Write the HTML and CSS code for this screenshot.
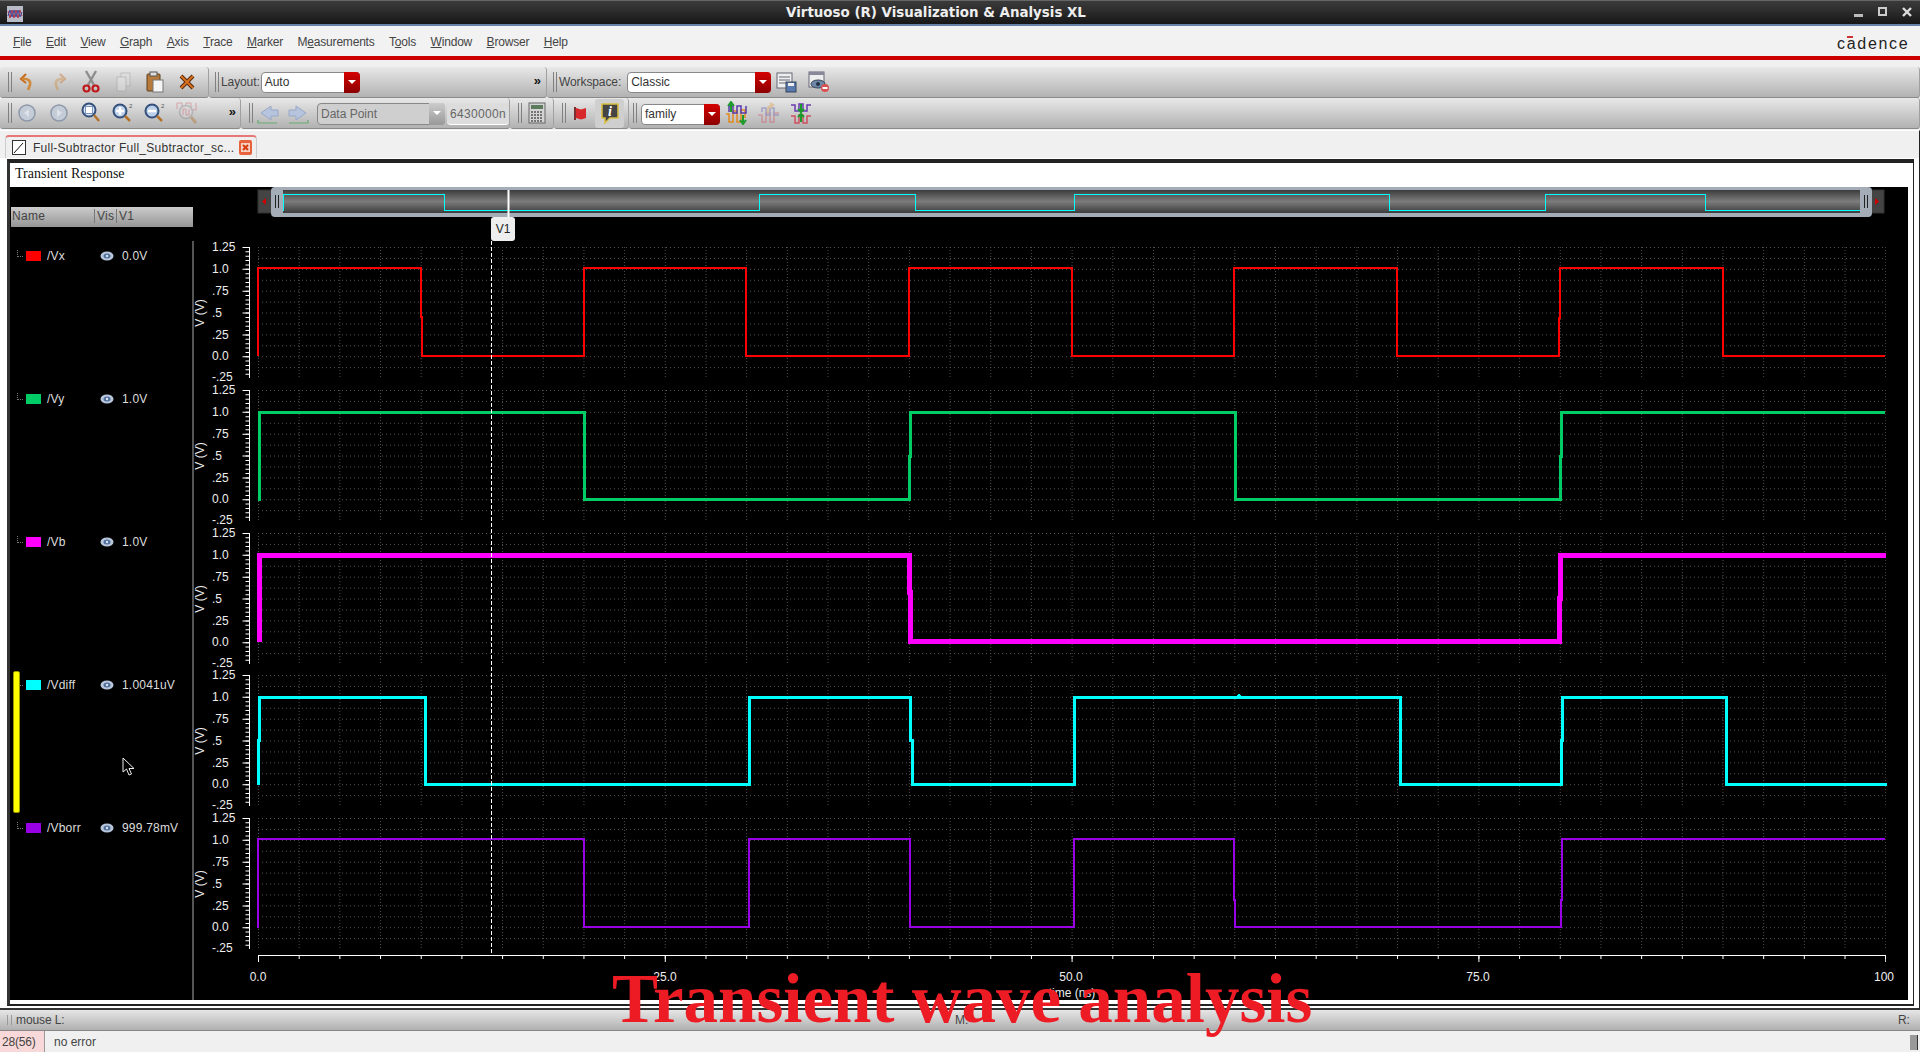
FILE: index.html
```html
<!DOCTYPE html>
<html lang="en">
<head>
  <meta charset="UTF-8">
  <title>Virtuoso (R) Visualization &amp; Analysis XL</title>
  <link rel="stylesheet" href="styles.css">
</head>
<body>
  <div class="titlebar">
    <svg class="app-icon" width="16" height="16" viewBox="0 0 16 16"><rect width="16" height="16" fill="#b9bcc6"/><path d="M1 5 3 12 5 4 7 12 9 4 11 12 13 4 15 10" fill="none" stroke="#b03048" stroke-width="1"/><path d="M1 10 3 4 5 11 7 4 9 11 11 4 13 11 15 6" fill="none" stroke="#3a4a9a" stroke-width="1"/></svg>
    <span class="title-text">Virtuoso (R) Visualization &amp; Analysis XL</span>
    <div class="win-btns">
      <svg width="12" height="12" viewBox="0 0 12 12"><rect x="1" y="8" width="9" height="3" fill="#bbb"/></svg>
      <svg width="12" height="12" viewBox="0 0 12 12"><rect x="2" y="2" width="7" height="7" fill="none" stroke="#ccc" stroke-width="2"/></svg>
      <svg width="12" height="12" viewBox="0 0 12 12"><path d="M2 2 10 10M10 2 2 10" stroke="#ddd" stroke-width="2.4"/></svg>
    </div>
  </div>

  <div class="menubar">
    <span class="menu-item"><u>F</u>ile</span>
    <span class="menu-item"><u>E</u>dit</span>
    <span class="menu-item"><u>V</u>iew</span>
    <span class="menu-item"><u>G</u>raph</span>
    <span class="menu-item"><u>A</u>xis</span>
    <span class="menu-item"><u>T</u>race</span>
    <span class="menu-item"><u>M</u>arker</span>
    <span class="menu-item">M<u>e</u>asurements</span>
    <span class="menu-item">T<u>o</u>ols</span>
    <span class="menu-item"><u>W</u>indow</span>
    <span class="menu-item"><u>B</u>rowser</span>
    <span class="menu-item"><u>H</u>elp</span>
    <span class="logo">cadence<i class="logo-bar"></i></span>
  </div>

  <div class="toolbar">
    <div class="tool-section sec-edit">
      <i class="grip"></i>
      <span class="slot"><svg width="24" height="24" viewBox="0 0 24 24"><path d="M11 4 6 9l5 4" fill="none" stroke="#c96a1c" stroke-width="2"/><path d="M7 9c6-1 9 2 8 6l-2 5" fill="none" stroke="#d08a3c" stroke-width="2.600"/></svg></span>
      <span class="slot faded"><svg width="24" height="24" viewBox="0 0 24 24"><path d="M13 4 18 9l-5 4" fill="none" stroke="#c96a1c" stroke-width="2"/><path d="M17 9c-6-1-9 2-8 6l2 5" fill="none" stroke="#d08a3c" stroke-width="2.600"/></svg></span>
      <span class="slot"><svg width="24" height="24" viewBox="0 0 24 24"><path d="M7 1 15 15M17 1 9 15" stroke="#8d8d8d" stroke-width="2.4"/><circle cx="7.5" cy="18.5" r="3" fill="none" stroke="#c01818" stroke-width="2.2"/><circle cx="16.5" cy="18.5" r="3" fill="none" stroke="#c01818" stroke-width="2.2"/></svg></span>
      <span class="slot faded"><svg width="24" height="24" viewBox="0 0 24 24"><rect x="10" y="3" width="9" height="13" fill="#e4e4e4" stroke="#999"/><rect x="6" y="7" width="9" height="14" fill="#ececec" stroke="#999"/></svg></span>
      <span class="slot"><svg width="24" height="24" viewBox="0 0 24 24"><rect x="4" y="4" width="13" height="17" rx="1" fill="#b87a3a" stroke="#5c3c1c"/><rect x="7" y="2" width="7" height="4" fill="#ddd" stroke="#555"/><rect x="10" y="10" width="10" height="12" fill="#f4f4f4" stroke="#777"/></svg></span>
      <span class="slot"><svg width="24" height="24" viewBox="0 0 24 24"><path d="M6 6 18 18M18 6 6 18" stroke="#5a2a10" stroke-width="4"/><path d="M6 6 18 18M18 6 6 18" stroke="#d8701c" stroke-width="2"/></svg></span>
    </div>
    <div class="tool-section sec-layout">
      <i class="grip"></i>
      <span class="tool-label">Layout:</span>
      <span class="combo combo-layout">Auto<i class="combo-arrow"></i></span>
      <span class="more">»</span>
    </div>
    <div class="tool-section sec-workspace">
      <i class="grip"></i>
      <span class="tool-label">Workspace:</span>
      <span class="combo combo-workspace">Classic<i class="combo-arrow"></i></span>
      <span class="slot"><svg width="24" height="24" viewBox="0 0 24 24"><rect x="2" y="3" width="15" height="15" fill="#eee" stroke="#667"/><path d="M4 7H15M4 10H15M4 13H12" stroke="#667"/><rect x="11" y="12" width="10" height="10" fill="#5a78b0" stroke="#345"/><rect x="13" y="13" width="6" height="3" fill="#eee"/></svg></span>
      <span class="slot"><svg width="24" height="24" viewBox="0 0 24 24"><rect x="2" y="2" width="15" height="15" fill="#eee" stroke="#667"/><rect x="2" y="2" width="15" height="3" fill="#889"/><ellipse cx="11" cy="14" rx="7" ry="4" fill="#7088a8" stroke="#345"/><circle cx="11" cy="14" r="2" fill="#234"/><circle cx="18" cy="18" r="4" fill="#d85050"/><rect x="15.500" y="17" width="5" height="2" fill="#fff"/></svg></span>
    </div>
  </div>

  <div class="toolbar">
    <div class="tool-section sec-zoom">
      <i class="grip"></i>
      <span class="slot"><svg width="24" height="24" viewBox="0 0 24 24"><circle cx="12" cy="12" r="8" fill="#c4ccd8" stroke="#8d98aa" stroke-width="1.500"/><path d="M14 8 9 12l5 4z" fill="#dde2ea"/></svg></span>
      <span class="slot"><svg width="24" height="24" viewBox="0 0 24 24"><circle cx="12" cy="12" r="8" fill="#c4ccd8" stroke="#8d98aa" stroke-width="1.500"/><path d="M10 8 15 12l-5 4z" fill="#dde2ea"/></svg></span>
      <span class="slot"><svg width="24" height="24" viewBox="0 0 24 24"><circle cx="10" cy="9" r="6.500" fill="#dce6f6" stroke="#34507a" stroke-width="2"/><rect x="6.500" y="5.500" width="7" height="7" fill="#fff" stroke="#7a94c0"/><path d="M15 14 20 20" stroke="#b5702a" stroke-width="2.500"/></svg></span>
      <span class="slot"><svg width="24" height="24" viewBox="0 0 24 24"><circle cx="9" cy="10" r="6.500" fill="#bcd0ec" stroke="#34507a" stroke-width="2"/><path d="M5 10H13M9 6V14" stroke="#fff" stroke-width="2.500"/><path d="M14 15 19 20" stroke="#b5702a" stroke-width="2.500"/><text class="sup" x="18" y="7">2</text></svg></span>
      <span class="slot"><svg width="24" height="24" viewBox="0 0 24 24"><circle cx="9" cy="10" r="6.500" fill="#bcd0ec" stroke="#34507a" stroke-width="2"/><path d="M5 10H13" stroke="#fff" stroke-width="2.500"/><path d="M14 15 19 20" stroke="#b5702a" stroke-width="2.500"/><text class="sup" x="18" y="7">2</text></svg></span>
      <span class="slot faded"><svg width="24" height="24" viewBox="0 0 24 24"><path d="M2 8V2H7V9H11V2H16V9H21V2" fill="none" stroke="#d05060"/><circle cx="11" cy="11" r="6.500" fill="#ddd" stroke="#888" stroke-width="1.500"/><path d="M8 14V8H11V14H14V8" fill="none" stroke="#d05060"/><path d="M16 16 21 22" stroke="#b5702a" stroke-width="3"/></svg></span>
      <span class="more">»</span>
    </div>
    <div class="tool-section sec-point">
      <i class="grip"></i>
      <span class="slot slot-step"><svg width="24" height="24" viewBox="0 0 24 24"><path d="M15 5V9H22V15H15V19L5 12z" fill="#b6c4de" stroke="#98a8c6"/><path d="M2 19V22H21" fill="none" stroke="#6aaa70" stroke-width="1.200"/></svg></span>
      <span class="slot slot-step"><svg width="24" height="24" viewBox="0 0 24 24"><path d="M10 5V9H3V15H10V19L20 12z" fill="#b6c4de" stroke="#98a8c6"/><path d="M3 22H22V19" fill="none" stroke="#6aaa70" stroke-width="1.200"/></svg></span>
      <span class="combo combo-point">Data Point<i class="combo-arrow arrow-off"></i></span>
      <span class="value-box">6430000n</span>
    </div>
    <div class="tool-section sec-calc">
      <i class="grip"></i>
      <span class="slot slot-single"><svg width="24" height="24" viewBox="0 0 24 24"><rect x="4" y="2" width="16" height="20" fill="#d4d4d4" stroke="#666"/><rect x="6" y="4" width="12" height="4" fill="#5c7a5c"/><path d="M6 11H18M6 14H18M6 17H18M6 20H18" stroke="#555" stroke-width="1.500" stroke-dasharray="2 1"/></svg></span>
    </div>
    <div class="tool-section sec-marks">
      <i class="grip"></i>
      <span class="slot slot-flag"><svg width="24" height="24" viewBox="0 0 24 24"><path d="M7 6V19" stroke="#7a3030" stroke-width="2"/><path d="M8 7 13 8.500 18 7V17L13 18.500 8 17z" fill="#d8282c"/></svg></span>
      <span class="toggle-btn"><svg width="24" height="24" viewBox="0 0 24 24"><path d="M4 3H20V17H12L7 22V17H4z" fill="#444" stroke="#d8c040" stroke-width="1.500"/><text class="info-i" x="12" y="15">i</text></svg></span>
    </div>
    <div class="tool-section sec-family">
      <i class="grip"></i>
      <span class="combo combo-family">family<i class="combo-arrow"></i></span>
      <span class="slot"><svg width="24" height="24" viewBox="0 0 24 24"><path d="M1 13H4V21H8V10H12V21H16V9H20V17" fill="none" stroke="#e08a20" stroke-width="1.500"/><path d="M4 11V5H8V12H12V5H16V12H21V5" fill="none" stroke="#5a3ab0" stroke-width="1.500"/><path d="M6 11V3M3 5 6 1l3 4" fill="none" stroke="#1a9a2a" stroke-width="2"/><path d="M18 14V21M15 19l3 4 3-4" fill="none" stroke="#1a9a2a" stroke-width="2"/></svg></span>
      <span class="slot faded"><svg width="24" height="24" viewBox="0 0 24 24"><path d="M1 14H5V21H9V12H13V21H17V12H22" fill="none" stroke="#d05060" stroke-width="1.500"/><path d="M5 11V7H9V14H13V7H17V14H22" fill="none" stroke="#5a5ab0" stroke-width="1.500"/><path d="M11 12C10 7 12 4 16 4M13 2l3 2-3 3" fill="none" stroke="#e0a040" stroke-width="2"/></svg></span>
      <span class="slot"><svg width="24" height="24" viewBox="0 0 24 24"><path d="M2 4H6V10H10V3H14V10H18V4H22" fill="none" stroke="#6a3ab0" stroke-width="1.500"/><path d="M2 15H6V22H10V14H14V22H18V15H22" fill="none" stroke="#d05060" stroke-width="1.500"/><path d="M12 3V10M9 8l3 3 3-3" fill="none" stroke="#1a9a2a" stroke-width="2"/><path d="M12 21V14M9 16l3-3 3 3" fill="none" stroke="#1a9a2a" stroke-width="2"/></svg></span>
    </div>
  </div>

  <div class="tabstrip">
    <div class="tab">
      <svg class="tab-icon" width="14" height="15" viewBox="0 0 14 15"><rect x="0.500" y="0.500" width="13" height="14" fill="#fff" stroke="#333"/><path d="M2 13 11 3" stroke="#111"/></svg>
      <span class="tab-text">Full-Subtractor Full_Subtractor_sc...</span>
      <svg class="tab-close" width="13" height="15" viewBox="0 0 13 15"><rect width="13" height="15" rx="2" fill="#e8623c"/><rect x="2" y="3" width="9" height="9" fill="#f4d0c0"/><path d="M4 5 9 10M9 5 4 10" stroke="#d83a10" stroke-width="2"/></svg>
    </div>
  </div>

  <div class="frame">
    <div class="frame-inner">
      <div class="plot-title">Transient Response</div>
      <div class="plot-body">
        <div class="legend">
          <div class="legend-head">
            <span class="col-name">Name</span>
            <span class="col-vis">Vis</span>
            <span class="col-val">V1</span>
          </div>
          <div class="legend-rows">
            <div class="legend-row">
              <i class="tree"></i><i class="swatch c-vx"></i><span class="sig-name">/Vx</span>
              <svg class="eye" width="14" height="10" viewBox="0 0 14 10"><ellipse cx="7" cy="5" rx="6.500" ry="4.500" fill="#b8c6dc"/><ellipse cx="7" cy="5" rx="3.500" ry="2.500" fill="#52709c"/><circle cx="7" cy="5" r="1.200" fill="#dde6f2"/></svg>
              <span class="sig-val">0.0V</span>
            </div>
            <div class="legend-row">
              <i class="tree"></i><i class="swatch c-vy"></i><span class="sig-name">/Vy</span>
              <svg class="eye" width="14" height="10" viewBox="0 0 14 10"><ellipse cx="7" cy="5" rx="6.500" ry="4.500" fill="#b8c6dc"/><ellipse cx="7" cy="5" rx="3.500" ry="2.500" fill="#52709c"/><circle cx="7" cy="5" r="1.200" fill="#dde6f2"/></svg>
              <span class="sig-val">1.0V</span>
            </div>
            <div class="legend-row">
              <i class="tree"></i><i class="swatch c-vb"></i><span class="sig-name">/Vb</span>
              <svg class="eye" width="14" height="10" viewBox="0 0 14 10"><ellipse cx="7" cy="5" rx="6.500" ry="4.500" fill="#b8c6dc"/><ellipse cx="7" cy="5" rx="3.500" ry="2.500" fill="#52709c"/><circle cx="7" cy="5" r="1.200" fill="#dde6f2"/></svg>
              <span class="sig-val">1.0V</span>
            </div>
            <div class="legend-row selected">
              <i class="tree"></i><i class="swatch c-vdiff"></i><span class="sig-name">/Vdiff</span>
              <svg class="eye" width="14" height="10" viewBox="0 0 14 10"><ellipse cx="7" cy="5" rx="6.500" ry="4.500" fill="#b8c6dc"/><ellipse cx="7" cy="5" rx="3.500" ry="2.500" fill="#52709c"/><circle cx="7" cy="5" r="1.200" fill="#dde6f2"/></svg>
              <span class="sig-val">1.0041uV</span>
              <svg class="mouse" width="14" height="20" viewBox="0 0 14 20"><path d="M1 1V15L4.500 12 7 18 9.500 17 7 11.500H12z" fill="#000" stroke="#eee"/></svg>
            </div>
            <div class="legend-row">
              <i class="tree"></i><i class="swatch c-vborr"></i><span class="sig-name">/Vborr</span>
              <svg class="eye" width="14" height="10" viewBox="0 0 14 10"><ellipse cx="7" cy="5" rx="6.500" ry="4.500" fill="#b8c6dc"/><ellipse cx="7" cy="5" rx="3.500" ry="2.500" fill="#52709c"/><circle cx="7" cy="5" r="1.200" fill="#dde6f2"/></svg>
              <span class="sig-val">999.78mV</span>
            </div>
          </div>
        </div>

        <svg class="plot" width="1716" height="813" viewBox="193 187 1716 813">
          <defs>
            <linearGradient id="overview-fill" x1="0" y1="0" x2="0" y2="1">
              <stop offset="0" stop-color="#3c3c3c"/><stop offset="0.5" stop-color="#7c7c7c"/><stop offset="1" stop-color="#3c3c3c"/>
            </linearGradient>
            <pattern id="grid-rows" patternUnits="userSpaceOnUse" x="258" y="247" width="4" height="10.920"><rect width="1" height="1" fill="#555"/></pattern>
            <pattern id="grid-cols" patternUnits="userSpaceOnUse" x="258" y="247" width="40.680" height="3"><rect width="1" height="1" fill="#4c4c4c"/></pattern>
            <g id="strip-frame">
              <rect x="258" y="247" width="1628" height="131" fill="url(#grid-rows)"/>
              <rect x="258" y="247" width="1628" height="131" fill="url(#grid-cols)"/>
              <path class="axis" d="M249.500 247V378"/>
              <line class="tick" x1="247.500" y1="247" x2="247.500" y2="378" stroke-width="4" stroke-dasharray="1 3.370"/>
              <line class="tick" x1="246" y1="247" x2="246" y2="378" stroke-width="7" stroke-dasharray="1 20.850"/>
            </g>
          </defs>

          <!-- overview strip -->
          <rect class="ov-box" x="258" y="190" width="20" height="23"/>
          <rect class="ov-box" x="1864" y="190" width="20" height="23"/>
          <path class="ov-arrow" d="M266 198l-4 3.500 4 3.500z"/>
          <path class="ov-arrow" d="M1875 198l4 3.500-4 3.500z"/>
          <rect class="ov-handle" x="271" y="187" width="1601" height="30" rx="4"/>
          <rect x="283" y="190" width="1577" height="23" fill="url(#overview-fill)"/>
          <path class="ov-grip" d="M275.500 195V208M278.500 195V208M1864.500 195V208M1867.500 195V208"/>
          <path class="ov-wave" d="M283.500 210.500V194.500H444.500V210.500H759.500V194.500H915.500V210.500H1074.500V194.500H1389.500V210.500H1545.500V194.500H1705.500V210.500H1860"/>
          <path class="cursor-top" d="M508.500 190V217"/>

          <!-- strips: /Vx /Vy /Vb /Vdiff /Vborr -->
          <g>
            <use href="#strip-frame"/>
            <text class="ylab" x="212" y="251">1.25</text><text class="ylab" x="212" y="273">1.0</text><text class="ylab" x="212" y="295">.75</text><text class="ylab" x="212" y="317">.5</text><text class="ylab" x="212" y="339">.25</text><text class="ylab" x="212" y="360">0.0</text><text class="ylab" x="212" y="381">-.25</text>
            <text class="yname" transform="translate(204 313) rotate(-90)">V (V)</text>
          </g>
          <g transform="translate(0 143)">
            <use href="#strip-frame"/>
            <text class="ylab" x="212" y="251">1.25</text><text class="ylab" x="212" y="273">1.0</text><text class="ylab" x="212" y="295">.75</text><text class="ylab" x="212" y="317">.5</text><text class="ylab" x="212" y="339">.25</text><text class="ylab" x="212" y="360">0.0</text><text class="ylab" x="212" y="381">-.25</text>
            <text class="yname" transform="translate(204 313) rotate(-90)">V (V)</text>
          </g>
          <g transform="translate(0 286)">
            <use href="#strip-frame"/>
            <text class="ylab" x="212" y="251">1.25</text><text class="ylab" x="212" y="273">1.0</text><text class="ylab" x="212" y="295">.75</text><text class="ylab" x="212" y="317">.5</text><text class="ylab" x="212" y="339">.25</text><text class="ylab" x="212" y="360">0.0</text><text class="ylab" x="212" y="381">-.25</text>
            <text class="yname" transform="translate(204 313) rotate(-90)">V (V)</text>
          </g>
          <g transform="translate(0 428)">
            <use href="#strip-frame"/>
            <text class="ylab" x="212" y="251">1.25</text><text class="ylab" x="212" y="273">1.0</text><text class="ylab" x="212" y="295">.75</text><text class="ylab" x="212" y="317">.5</text><text class="ylab" x="212" y="339">.25</text><text class="ylab" x="212" y="360">0.0</text><text class="ylab" x="212" y="381">-.25</text>
            <text class="yname" transform="translate(204 313) rotate(-90)">V (V)</text>
          </g>
          <g transform="translate(0 571)">
            <use href="#strip-frame"/>
            <text class="ylab" x="212" y="251">1.25</text><text class="ylab" x="212" y="273">1.0</text><text class="ylab" x="212" y="295">.75</text><text class="ylab" x="212" y="317">.5</text><text class="ylab" x="212" y="339">.25</text><text class="ylab" x="212" y="360">0.0</text><text class="ylab" x="212" y="381">-.25</text>
            <text class="yname" transform="translate(204 313) rotate(-90)">V (V)</text>
          </g>

          <path class="wave w-vx" d="M258 356V268H421V317H422V356H584V268H746V356H909V268H1072V356H1234V268H1397V356H1559V318H1560V268H1723V356H1885"/>
          <path class="wave w-vy" d="M259 501V412H584.500V499H909V456H910V412H1235V499H1560V456H1561V412H1885"/>
          <path class="wave w-vb" d="M259 642V555H909V592H910V641H1559V598H1560V555H1886"/>
          <path class="wave w-vdiff" d="M258 785V740H259.500V697H425V784H749V697H910V740H912V784H1074V697H1238L1239 696 1240 697H1400V784H1561V740H1562V697H1726V784H1887"/>
          <path class="wave w-vborr" d="M258 928V839H584V927H749V839H910V927H1074V839H1234V900H1235V927H1561V900H1562V839H1885"/>

          <!-- time axis -->
          <path class="axis" d="M258 955.500H1886"/>
          <line class="tick" x1="258" y1="957" x2="1886" y2="957" stroke-width="4" stroke-dasharray="1 39.680"/>
          <line class="tick" x1="258" y1="958.500" x2="1886" y2="958.500" stroke-width="7" stroke-dasharray="1 405.800"/>
          <text class="xlab" x="258" y="981">0.0</text>
          <text class="xlab" x="665" y="981">25.0</text>
          <text class="xlab" x="1071" y="981">50.0</text>
          <text class="xlab" x="1478" y="981">75.0</text>
          <text class="xlab" x="1884" y="981">100</text>
          <text class="xlab" x="1072" y="997">time (ns)</text>

          <!-- cursor V1 -->
          <path class="cursor-line" d="M491.500 241V955"/>
          <rect class="flag-box" x="491" y="217" width="24" height="24" rx="3"/>
          <text class="flag-text" x="503" y="233">V1</text>
        </svg>
      </div>
    </div>
  </div>

  <div class="statusbar">
    <i class="status-grip"></i>
    <span class="status-left">mouse L:</span>
    <span class="status-mid">M:</span>
    <span class="status-right">R:</span>
  </div>
  <div class="msgbar">
    <span class="msg-count">28(56)</span>
    <span class="msg-text">no error</span>
    <i class="msg-scroll"></i>
  </div>

  <div class="caption">Transient wave analysis</div>
</body>
</html>
```

FILE: styles.css
```css
* {
  box-sizing: border-box;
}

body {
  margin: 0;
  width: 1920px;
  height: 1052px;
  overflow: hidden;
  position: relative;
  display: flex;
  flex-direction: column;
  background: #f0f0f0;
  font-family: "Liberation Sans", Arial, sans-serif;
  font-size: 12px;
  color: #333;
}

i {
  font-style: normal;
}

/* window title */
.titlebar {
  height: 26px;
  flex: none;
  display: flex;
  align-items: center;
  justify-content: center;
  position: relative;
  padding-right: 48px;
  background: linear-gradient(#3a3a3a, #2e2e2e 40%, #161616);
  border-top: 1px solid #666;
  border-bottom: 2px solid #6682a8;
}

.app-icon {
  position: absolute;
  left: 7px;
  top: 5px;
}

.title-text {
  font-family: "DejaVu Sans", sans-serif;
  font-weight: 700;
  font-size: 13.4px;
  color: #eee;
}

.win-btns {
  position: absolute;
  right: 7px;
  top: 5px;
  display: flex;
  gap: 12px;
}

/* menu */
.menubar {
  height: 34px;
  flex: none;
  display: flex;
  align-items: center;
  padding: 1px 0 0 13px;
  background: #f2f2f2;
  border-bottom: 4px solid #cc0000;
  position: relative;
  letter-spacing: -0.2px;
  color: #444;
}

.menu-item {
  margin-right: 14.5px;
}

.logo {
  position: absolute;
  left: 1837px;
  top: 9px;
  font-size: 16px;
  letter-spacing: 1.7px;
  color: #222;
}

.logo-bar {
  position: absolute;
  left: 10px;
  top: 1px;
  width: 6px;
  height: 2px;
  background: #cc3333;
}

/* toolbars */
.toolbar {
  height: 31px;
  flex: none;
  display: flex;
}

.menubar + .toolbar {
  margin-top: 7px;
}

.tool-section {
  display: flex;
  align-items: center;
  padding-left: 8px;
  background: linear-gradient(#e8e8e8, #b2b2b2);
  border-bottom: 1px solid #8a8a8a;
  border-right: 1px solid #a0a0a0;
  border-radius: 3px;
  color: #444;
}

.grip {
  width: 4px;
  height: 20px;
  flex: none;
  border-left: 1px solid #808080;
  border-right: 1px solid #808080;
}

.slot {
  width: 32px;
  height: 24px;
  flex: none;
  display: flex;
  justify-content: center;
}

.faded {
  opacity: 0.4;
}

.sup {
  font-size: 6px;
  fill: #555;
}

.info-i {
  font-family: "Liberation Serif", serif;
  font-size: 14px;
  font-style: italic;
  font-weight: 700;
  text-anchor: middle;
  fill: #fff;
}

.more {
  font-size: 13px;
  font-weight: 700;
  color: #111;
  margin-left: auto;
  margin-bottom: 4px;
}

.tool-label {
  letter-spacing: -0.1px;
}

.combo {
  position: relative;
  display: flex;
  align-items: center;
  height: 21px;
  padding-left: 3px;
  background: #fff;
  border: 1px solid #888;
  border-radius: 4px;
  color: #333;
  flex: none;
}

.combo-arrow {
  position: absolute;
  right: -1px;
  top: -1px;
  width: 16px;
  height: 21px;
  background: linear-gradient(#d40000, #8c0000);
  border-radius: 0 4px 4px 0;
}

.combo-arrow::after {
  content: "";
  position: absolute;
  left: 4px;
  top: 8px;
  border-left: 4px solid transparent;
  border-right: 4px solid transparent;
  border-top: 4px solid #fff;
}

.arrow-off {
  background: linear-gradient(#ccc, #999);
}

.sec-edit {
  width: 209px;
}

.sec-edit .grip {
  margin-right: -1px;
}

.sec-layout {
  width: 338px;
  padding-right: 5px;
  padding-left: 6px;
}

.sec-layout .tool-label {
  margin-left: 2px;
}

.combo-layout {
  width: 99px;
  margin-left: 1px;
}

.sec-workspace {
  flex: 1;
  padding-left: 6px;
}

.sec-workspace .tool-label {
  margin-left: 2px;
}

.combo-workspace {
  width: 144px;
  margin-left: 6px;
}

.sec-zoom {
  width: 241px;
  padding-right: 4px;
}

.sec-zoom .grip {
  margin-right: -1px;
}

.sec-point {
  width: 269px;
}

.slot-step {
  width: 30px;
}

.combo-point {
  width: 128px;
  margin: 2px 0 0 4px;
  height: 22px;
  background: #cfcfcf;
  color: #666;
}

.combo-point .combo-arrow {
  height: 22px;
}

.value-box {
  width: 63px;
  height: 21px;
  margin: 2px 0 0 2px;
  display: flex;
  align-items: center;
  justify-content: center;
  background: #dcdcdc;
  border-bottom: 1px solid #fff;
  border-radius: 4px;
  color: #666;
  letter-spacing: 0.3px;
}

.sec-calc {
  width: 44px;
}

.slot-single {
  width: 30px;
}

.sec-marks {
  width: 75px;
}

.slot-flag {
  width: 28px;
}

.toggle-btn {
  width: 29px;
  height: 29px;
  display: flex;
  align-items: center;
  justify-content: center;
  background: #cfcfcf;
  border-radius: 3px;
  flex: none;
  margin-left: 1px;
}

.sec-family {
  flex: 1;
  padding-left: 4px;
}

.combo-family {
  width: 79px;
  margin: 2px 1px 0 4px;
}

/* tab strip */
.tabstrip {
  height: 28px;
  flex: none;
  margin-top: 1px;
  padding: 4px 0 0 5px;
  background: #f0f0f0;
  border-top: 1px solid #fff;
  border-right: 1px solid #222;
}

.tab {
  width: 252px;
  height: 23px;
  display: flex;
  align-items: center;
  padding-left: 6px;
  background: #efefef;
  border: 1px solid #ccc;
  border-top: 2px solid #e87878;
  border-bottom: none;
  border-radius: 4px 4px 0 0;
}

.tab-text {
  margin-left: 7px;
  width: 206px;
  white-space: nowrap;
  letter-spacing: 0.25px;
  color: #333;
}

.tab-close {
  flex: none;
}

/* plot frame */
.frame {
  height: 852px;
  flex: none;
  padding: 1px 5px 2px 7px;
  background: #fff;
  border-right: 1px solid #222;
  border-bottom: 2px solid #333;
}

.frame-inner {
  height: 100%;
  padding: 0 5px 4px 0;
  display: flex;
  flex-direction: column;
  border-top: 4px solid #222;
  border-left: 3px solid #333;
  border-right: 1px solid #222;
  border-bottom: 2px solid #222;
  background: #fff;
}

.plot-title {
  height: 24px;
  flex: none;
  padding: 3px 0 0 5px;
  font-family: "Liberation Serif", serif;
  font-size: 14px;
  color: #111;
}

.plot-body {
  flex: 1;
  display: flex;
  background: #000;
  overflow: hidden;
}

/* legend column */
.legend {
  width: 183px;
  flex: none;
  background: #000;
  padding-top: 20px;
  position: relative;
}

.legend-head {
  height: 20px;
  margin-left: 1px;
  padding-bottom: 2px;
  display: flex;
  align-items: center;
  background: linear-gradient(#cccccc, #959595);
  color: #444;
  letter-spacing: 0.3px;
}

.col-name {
  width: 84px;
  padding-left: 1px;
  border-right: 1px solid #777;
}

.col-vis {
  width: 22px;
  padding-left: 2px;
  border-right: 1px solid #777;
}

.col-val {
  padding-left: 2px;
}

.legend-rows {
  margin-top: 16px;
  position: relative;
}

.legend-rows::after {
  content: "";
  position: absolute;
  right: -1px;
  top: -2px;
  height: 770px;
  width: 2px;
  background: #555;
}

.legend-row {
  height: 143px;
  padding: 7px 0 0 7px;
  display: flex;
  align-items: flex-start;
  position: relative;
  color: #ddd;
  line-height: 12px;
}

.selected::before {
  content: "";
  position: absolute;
  left: 3px;
  top: -1px;
  width: 5px;
  height: 140px;
  background: #ffff00;
  border-radius: 2px;
  border: 1px solid #999900;
}

.tree {
  width: 6px;
  height: 7px;
  flex: none;
  border-left: 1px dotted #777;
  border-bottom: 1px dotted #777;
}

.swatch {
  width: 15px;
  height: 10px;
  flex: none;
  margin: 1px 6px 0 3px;
}

.c-vx { background: #ff0000; }
.c-vy { background: #00cc66; }
.c-vb { background: #ff00ff; }
.c-vdiff { background: #00ffff; }
.c-vborr { background: #9900e6; }

.sig-name {
  width: 53px;
  flex: none;
  letter-spacing: 0.2px;
}

.eye {
  flex: none;
  margin: 1px 8px 0 0;
}

.sig-val {
  white-space: nowrap;
  letter-spacing: 0.2px;
}

.mouse {
  position: absolute;
  left: 112px;
  top: 85px;
}

/* plot drawing */
.plot {
  display: block;
  flex: none;
  font-family: "Liberation Sans", Arial, sans-serif;
  font-size: 12px;
}

.axis {
  fill: none;
  stroke: #fff;
  stroke-width: 1;
}

.tick {
  stroke: #fff;
  fill: none;
}

.ylab {
  fill: #eee;
}

.yname {
  fill: #eee;
  text-anchor: middle;
}

.xlab {
  fill: #eee;
  text-anchor: middle;
}

.wave {
  fill: none;
  stroke-linejoin: miter;
  shape-rendering: crispEdges;
}

.w-vx { stroke: #ff0000; stroke-width: 2; }
.w-vy { stroke: #00cc66; stroke-width: 3; }
.w-vb { stroke: #ff00ff; stroke-width: 5; }
.w-vdiff { stroke: #00ffff; stroke-width: 3; }
.w-vborr { stroke: #9900e6; stroke-width: 2; }

.ov-box {
  fill: #444;
  stroke: #333;
}

.ov-arrow {
  fill: #cc0000;
}

.ov-handle {
  fill: #a4acb8;
}

.ov-grip {
  stroke: #222;
  fill: none;
}

.ov-wave {
  fill: none;
  stroke: #00ffff;
  stroke-width: 1;
  shape-rendering: crispEdges;
}

.cursor-top {
  stroke: #fff;
  stroke-width: 2;
}

.cursor-line {
  stroke: #fff;
  fill: none;
  stroke-dasharray: 4 2;
}

.flag-box {
  fill: #eee;
}

.flag-text {
  fill: #222;
  text-anchor: middle;
}

/* status */
.statusbar {
  height: 21px;
  flex: none;
  display: flex;
  align-items: center;
  position: relative;
  padding-left: 7px;
  background: linear-gradient(#e6e6e6, #b0b0b0);
  border-bottom: 1px solid #888;
  color: #444;
  letter-spacing: -0.1px;
}

.status-grip {
  width: 5px;
  height: 10px;
  border-left: 1px solid #999;
  border-right: 1px solid #999;
  margin-right: 4px;
}

.status-mid {
  position: absolute;
  left: 955px;
}

.status-right {
  position: absolute;
  left: 1898px;
}

.msgbar {
  height: 21px;
  flex: none;
  display: flex;
  align-items: stretch;
  background: #f0f0f0;
  color: #444;
  position: relative;
}

.msg-count {
  width: 45px;
  display: flex;
  align-items: center;
  padding-left: 2px;
  background: #f8d8d8;
  border-right: 1px solid #999;
  letter-spacing: -0.2px;
}

.msg-text {
  margin-left: 9px;
  display: flex;
  align-items: center;
}

.msg-scroll {
  position: absolute;
  right: 2px;
  top: 4px;
  width: 8px;
  height: 15px;
  background: #999;
  border-right: 1px solid #333;
}

/* title burned onto the screenshot */
.caption {
  position: absolute;
  left: 612px;
  top: 963px;
  font-family: "Liberation Serif", serif;
  font-weight: 700;
  font-size: 69px;
  line-height: 72px;
  color: #ed1c24;
  white-space: nowrap;
}
```
